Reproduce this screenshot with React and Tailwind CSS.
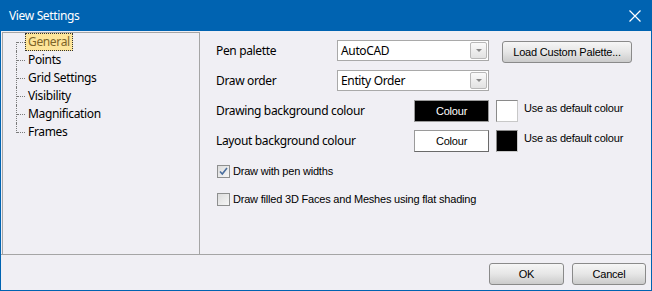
import React from "react";

const SEG = "font-['Noto_Sans',sans-serif] tracking-[-0.35px]";
const ARL = "tracking-[-0.2px]";

function TreeItem({ label, first, last, selected }) {
  return (
    <div className="flex h-[18px] items-stretch">
      <div className="relative w-[9px]">
        <div
          className={
            "absolute left-0 w-0 border-l border-dotted border-[#7a7a7a] " +
            (first ? "top-[9px] bottom-0" : last ? "top-0 h-[10px]" : "top-0 bottom-0")
          }
        />
        <div className="absolute left-[1px] top-[9px] h-0 w-[8px] border-t border-dotted border-[#7a7a7a]" />
      </div>
      <div className="flex items-center">
        <span
          className={
            "flex h-[18px] items-center px-[2px] leading-none " +
            (selected
              ? "border border-dotted border-[#333] bg-[#fde59a] text-[#7d6428]"
              : "border border-transparent text-black")
          }
        >
          {label}
        </span>
      </div>
    </div>
  );
}

function Combo({ value }) {
  return (
    <div className="flex h-[21px] w-[152px] items-center justify-between border border-[#a9a9a9] bg-white pl-[3px] pr-[1px]">
      <span className={"text-[12px] leading-none text-black " + SEG}>{value}</span>
      <div className="flex h-[17px] w-[17px] items-center justify-center rounded-[2px] border border-[#b8b8b8] bg-gradient-to-b from-[#fafafa] to-[#e2e2e2]">
        <div className="h-0 w-0 border-x-[3px] border-t-[3px] border-x-transparent border-t-[#888]" />
      </div>
    </div>
  );
}

function WinButton({ children, className = "" }) {
  return (
    <div
      className={
        "flex h-[22px] items-center justify-center rounded-[3px] border border-[#8a8a8a] bg-gradient-to-b from-[#f6f6f6] via-[#e6e6e6] to-[#cbcbcb] text-[11px] text-black " +
        ARL +
        " " +
        className
      }
    >
      {children}
    </div>
  );
}

function ColourRow({ label, black }) {
  return (
    <div className="flex h-[22px] items-center">
      <div className={"w-[198px] text-[12px] text-black " + SEG}>{label}</div>
      <div
        className={
          "flex h-[22px] w-[75px] items-center justify-center border text-[11px] " +
          ARL +
          " " +
          (black
            ? "border-[#9a9a9a] bg-black text-white"
            : "border-[#9a9a9a] border-b-[#6a6a6a] border-r-[#6a6a6a] bg-white text-black")
        }
      >
        Colour
      </div>
      <div
        className={
          "ml-[7px] h-[22px] w-[22px] border border-[#8a8a8a] border-b-[#c8c8c8] border-r-[#c8c8c8] " +
          (black ? "bg-white" : "bg-black")
        }
      />
      <div className={"ml-[6px] self-start pt-[2px] text-[11px] leading-[13px] text-black " + ARL}>
        Use as default colour
      </div>
    </div>
  );
}

function Check({ checked, label }) {
  return (
    <div className="flex h-[13px] items-center">
      <div className="flex h-[13px] w-[13px] items-center justify-center border border-[#8e8f8f] bg-gradient-to-br from-[#dcdcdc] to-[#f6f6f6]">
        {checked && (
          <svg width="9" height="9" viewBox="0 0 9 9">
            <path d="M1 4.5 L3.3 7 L8 1" fill="none" stroke="#4a6e9e" strokeWidth="1.6" />
          </svg>
        )}
      </div>
      <span className={"ml-[3px] text-[11px] leading-none text-black " + ARL}>{label}</span>
    </div>
  );
}

export default function App() {
  return (
    <div className="flex h-[291px] w-[652px] flex-col bg-[#0063b1] px-px pb-px font-['Liberation_Sans',Arial,sans-serif]">
      {/* Title bar */}
      <div className="flex h-[31px] shrink-0 items-center justify-between pl-[8px] pr-[10px]">
        <span className={"text-[12px] text-white " + SEG}>View Settings</span>
        <svg width="12" height="12" viewBox="0 0 12 12">
          <path d="M0.5 0.5 L11.5 11.5 M11.5 0.5 L0.5 11.5" stroke="white" strokeWidth="1.2" />
        </svg>
      </div>

      {/* Body */}
      <div className="flex flex-1 flex-col bg-[#f0eff4]">
        <div className="flex h-[224px] shrink-0 border-b border-[#a5a5a5]">
          {/* Tree panel */}
          <div className={"ml-px mt-px w-[198px] border-x border-t border-[#a5a5a5] pl-[13px] text-[12px] " + SEG}>
            <TreeItem label="General" first selected />
            <TreeItem label="Points" />
            <TreeItem label="Grid Settings" />
            <TreeItem label="Visibility" />
            <TreeItem label="Magnification" />
            <TreeItem label="Frames" last />
          </div>

          {/* Settings panel */}
          <div className="flex flex-1 flex-col pl-[16px] pt-[9px]">
            <div className="flex h-[21px] items-center">
              <div className={"w-[121px] text-[12px] text-black " + SEG}>Pen palette</div>
              <Combo value="AutoCAD" />
              <WinButton className="ml-[13px] mt-[3px] w-[130px]">Load Custom Palette...</WinButton>
            </div>
            <div className="mt-[9px] flex h-[21px] items-center">
              <div className={"w-[121px] text-[12px] text-black " + SEG}>Draw order</div>
              <Combo value="Entity Order" />
            </div>
            <div className="mt-[9px]">
              <ColourRow label="Drawing background colour" black />
            </div>
            <div className="mt-[8px]">
              <ColourRow label="Layout background colour" />
            </div>
            <div className="ml-px mt-[13px]">
              <Check checked label="Draw with pen widths" />
            </div>
            <div className="ml-px mt-[15px]">
              <Check label="Draw filled 3D Faces and Meshes using flat shading" />
            </div>
          </div>
        </div>

        {/* Footer */}
        <div className="flex flex-1 items-start justify-end gap-[8px] pr-[5px] pt-[8px]">
          <WinButton className="w-[75px] border-[#6d6d6d]">OK</WinButton>
          <WinButton className="w-[74px]">Cancel</WinButton>
        </div>
      </div>
    </div>
  );
}
